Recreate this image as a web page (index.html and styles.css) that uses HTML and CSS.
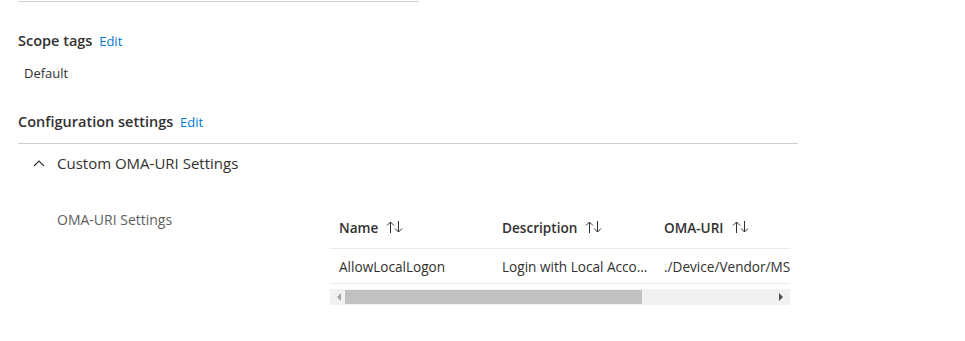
FILE: index.html
```html
<!DOCTYPE html>
<html lang="en">
<head>
    <meta charset="UTF-8">
    <title>Profile summary</title>
    <link rel="stylesheet" href="styles.css">
</head>
<body>
    <div class="page">
        <div class="top-rule"></div>

        <div class="section scope">
            <h2>Scope tags <a href="#">Edit</a></h2>
            <div class="value">Default</div>
        </div>

        <div class="section config">
            <h2>Configuration settings <a href="#">Edit</a></h2>
            <div class="config-body">
                <div class="group-head">
                    <svg class="chevron" width="12" height="8" viewBox="0 0 12 8">
                        <path d="M1 7 L6 2 L11 7" fill="none" stroke="#323130" stroke-width="1.1"/>
                    </svg>
                    <span>Custom OMA-URI Settings</span>
                </div>
                <div class="group-body">
                    <div class="label">OMA-URI Settings</div>
                    <div class="grid">
                        <div class="grid-row grid-header">
                            <div class="cell">Name <span class="sort"></span></div>
                            <div class="cell">Description <span class="sort"></span></div>
                            <div class="cell">OMA-URI <span class="sort"></span></div>
                        </div>
                        <div class="grid-row">
                            <div class="cell">AllowLocalLogon</div>
                            <div class="cell">Login with Local Acco...</div>
                            <div class="cell">./Device/Vendor/MS</div>
                        </div>
                        <div class="scrollbar">
                            <span class="arrow left"></span>
                            <div class="thumb"></div>
                            <span class="arrow right"></span>
                        </div>
                    </div>
                </div>
            </div>
        </div>
    </div>

    <script>
        // sort arrows for the column headers
        document.querySelectorAll('.sort').forEach(function (el) {
            el.innerHTML = '<svg width="18" height="14" viewBox="0 0 18 14">' +
                '<path d="M4.5 13 V2 M1 5.5 L4.5 2 L8 5.5" fill="none" stroke="#323130" stroke-width="1"/>' +
                '<path d="M12.5 1 V12 M9 8.5 L12.5 12 L16 8.5" fill="none" stroke="#323130" stroke-width="1"/>' +
                '</svg>';
        });
    </script>
</body>
</html>
```

FILE: styles.css
```css
body {
    margin: 0;
    font-family: "Open Sans", "Noto Sans", sans-serif;
    color: #323130;
    background-color: #ffffff;
}
.page {
    padding: 0 0 0 18px;
    width: 780px;
}
.top-rule {
    width: 401px;
    height: 1px;
    margin-top: 1px;
    background-color: #d2d0ce;
}
h2 {
    margin: 0;
    font-size: 14.5px;
    font-weight: 600;
    line-height: 20px;
}
h2 a {
    font-size: 13px;
    font-weight: 400;
    color: #0078d4;
    text-decoration: none;
    margin-left: 3px;
}
.scope {
    padding-top: 29px;
}
.scope .value {
    font-size: 13px;
    line-height: 20px;
    margin: 12px 0 0 6px;
}
.config {
    padding-top: 29px;
}
.config h2 {
    padding-bottom: 11px;
    border-bottom: 1px solid #d2d0ce;
}
.config-body {
    padding-left: 15px;
}
.group-head {
    display: flex;
    align-items: center;
    height: 38px;
    font-size: 15px;
}
.chevron {
    margin-right: 12px;
}
.group-body {
    display: flex;
    padding-top: 26px;
}
.label {
    width: 273px;
    font-size: 14px;
    color: #605e5c;
    line-height: 20px;
    padding: 2px 0 0 24px;
}
.grid {
    width: 460px;
}
.grid-row {
    display: grid;
    grid-template-columns: 163px 162px 135px;
    height: 34px;
    align-items: center;
    border-bottom: 1px solid #edebe9;
    font-size: 13.6px;
}
.grid-header {
    height: 38px;
    padding-bottom: 2px;
    font-weight: 600;
}
.cell {
    padding-left: 9px;
    white-space: nowrap;
    overflow: hidden;
    display: flex;
    align-items: center;
}
.sort {
    display: inline-flex;
    margin-left: 8px;
}
.scrollbar {
    display: flex;
    align-items: center;
    height: 16px;
    margin-top: 5px;
    background-color: #f1f1f1;
}
.thumb {
    width: 297px;
    height: 14px;
    margin-left: 4px;
    background-color: #c1c1c1;
    margin-right: auto;
}
.arrow {
    width: 0;
    height: 0;
    border-top: 4px solid transparent;
    border-bottom: 4px solid transparent;
}
.arrow.left {
    margin-left: 7px;
    border-right: 4px solid #a3a3a3;
}
.arrow.right {
    margin-right: 7px;
    border-left: 4px solid #505050;
}
```
